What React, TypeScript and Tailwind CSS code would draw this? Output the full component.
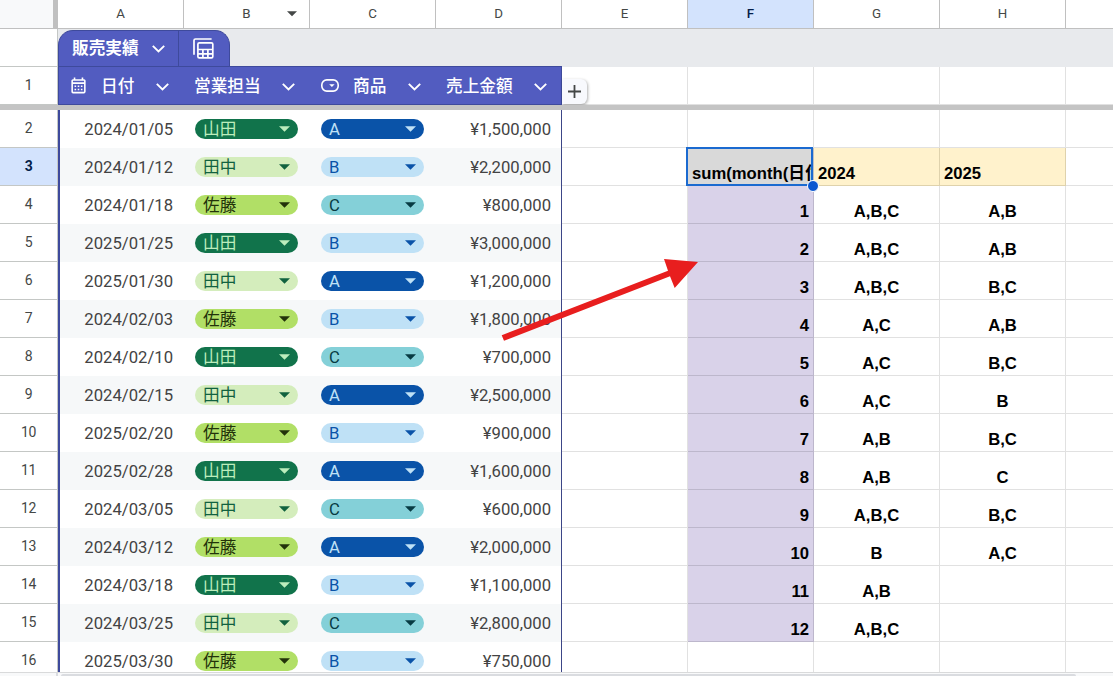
import type { ReactNode } from 'react';
import clsx from 'clsx';
import { MdOutlineCalendarMonth } from 'react-icons/md';

const columns = ['A', 'B', 'C', 'D', 'E', 'F', 'G', 'H'];

const sales = [
  { date: '2024/01/05', rep: '山田', product: 'A', amount: '¥1,500,000' },
  { date: '2024/01/12', rep: '田中', product: 'B', amount: '¥2,200,000' },
  { date: '2024/01/18', rep: '佐藤', product: 'C', amount: '¥800,000' },
  { date: '2025/01/25', rep: '山田', product: 'B', amount: '¥3,000,000' },
  { date: '2025/01/30', rep: '田中', product: 'A', amount: '¥1,200,000' },
  { date: '2024/02/03', rep: '佐藤', product: 'B', amount: '¥1,800,000' },
  { date: '2024/02/10', rep: '山田', product: 'C', amount: '¥700,000' },
  { date: '2024/02/15', rep: '田中', product: 'A', amount: '¥2,500,000' },
  { date: '2025/02/20', rep: '佐藤', product: 'B', amount: '¥900,000' },
  { date: '2025/02/28', rep: '山田', product: 'A', amount: '¥1,600,000' },
  { date: '2024/03/05', rep: '田中', product: 'C', amount: '¥600,000' },
  { date: '2024/03/12', rep: '佐藤', product: 'A', amount: '¥2,000,000' },
  { date: '2024/03/18', rep: '山田', product: 'B', amount: '¥1,100,000' },
  { date: '2024/03/25', rep: '田中', product: 'C', amount: '¥2,800,000' },
  { date: '2025/03/30', rep: '佐藤', product: 'B', amount: '¥750,000' },
];

// month, 2024, 2025
const pivot = [
  ['1', 'A,B,C', 'A,B'],
  ['2', 'A,B,C', 'A,B'],
  ['3', 'A,B,C', 'B,C'],
  ['4', 'A,C', 'A,B'],
  ['5', 'A,C', 'B,C'],
  ['6', 'A,C', 'B'],
  ['7', 'A,B', 'B,C'],
  ['8', 'A,B', 'C'],
  ['9', 'A,B,C', 'B,C'],
  ['10', 'B', 'A,C'],
  ['11', 'A,B', ''],
  ['12', 'A,B,C', ''],
];

const chipColors: Record<string, string> = {
  山田: 'bg-[#11734b] text-[#bcedbc]',
  田中: 'bg-[#d4edbc] text-[#11623f]',
  佐藤: 'bg-[#b1df66] text-[#23330a]',
  A: 'bg-[#0a53a8] text-[#bfe1f6]',
  B: 'bg-[#bfe1f6] text-[#0a53a8]',
  C: 'bg-[#84d0d8] text-[#073b43]',
};

function Chip({ label }: { label: string }) {
  return (
    <div className={clsx('flex h-[20.5px] w-[103px] items-center justify-between rounded-full pl-2 pr-[8px]', chipColors[label])}>
      <span className="pt-[2px] leading-5">{label}</span>
      <svg width="11" height="6" viewBox="0 0 11 6" fill="currentColor">
        <path d="M0 0.3h11L5.5 5.8z" />
      </svg>
    </div>
  );
}

function Chevron() {
  return (
    <svg width="13" height="8" viewBox="0 0 13 8" fill="none" stroke="currentColor" strokeWidth="1.9">
      <path d="M0.8 0.9l5.7 5.6 5.7-5.6" />
    </svg>
  );
}

function TableIcon() {
  return (
    <svg width="21" height="21" viewBox="0 0 21 21" fill="none" stroke="currentColor" strokeWidth="1.7">
      <path d="M1 16.8V2.5A1.5 1.5 0 0 1 2.5 1H18.6" />
      <rect x="4.9" y="4.9" width="14.9" height="14.9" rx="1.4" />
      <path d="M5 11.5h15M5 15.8h15M9.9 11.5v8.5M14.9 11.5v8.5" />
    </svg>
  );
}

function ChipIcon() {
  return (
    <svg width="18" height="13" viewBox="0 0 18 13" fill="none" stroke="currentColor" strokeWidth="1.6">
      <rect x="0.8" y="0.9" width="16.4" height="11.2" rx="5" />
      <path d="M8.2 5.2h5.4L10.9 8z" fill="currentColor" stroke="none" />
    </svg>
  );
}

function FieldHeader({ icon, label }: { icon?: ReactNode; label: string }) {
  return (
    <div className="flex w-[126px] items-center pr-[15px]">
      {icon && <span className="flex w-[43px] pl-[11px]">{icon}</span>}
      <span className={clsx('pt-[2px] font-medium', !icon && 'pl-[10px]')}>{label}</span>
      <span className="ml-auto pt-[2px]">
        <Chevron />
      </span>
    </div>
  );
}

function RowNumber({ n, active }: { n: number | string; active?: boolean }) {
  return (
    <div
      className={clsx(
        'flex w-[58px] shrink-0 items-center justify-center border-r border-b border-[#c4c7c5] text-[14px] tracking-[-0.4px]',
        active ? 'bg-[#d3e3fd] font-bold text-[#041e49]' : 'bg-white text-[#444746]'
      )}
    >
      {n}
    </div>
  );
}

function GridCell({ className, children }: { className?: string; children?: ReactNode }) {
  return (
    <div
      className={clsx(
        "flex w-[126px] shrink-0 overflow-hidden border-r border-b font-['Liberation_Sans','Noto_Sans_CJK_JP',sans-serif] font-bold text-black",
        className ?? 'border-[#e1e1e1]'
      )}
    >
      {children}
    </div>
  );
}

function PivotCells({ row }: { row: number }) {
  if (row === 3) {
    return (
      <>
        <div className="relative flex w-[126px] shrink-0">
          <GridCell className="items-end border-[#c0c0c0] bg-[#d9d9d9] pl-1">
            <span className="whitespace-nowrap leading-[22px]">sum(month(日付))</span>
          </GridCell>
          <div className="absolute -top-px -left-[2px] h-[39px] w-[127px] border-2 border-[#1b6ad0]" />
          <div className="absolute -right-[5px] -bottom-[6px] z-10 size-[12px] rounded-full border border-white bg-[#0b57d0]" />
        </div>
        <GridCell className="items-end border-[#dfd2ac] bg-[#fff2cc] pl-1 leading-[22px]">2024</GridCell>
        <GridCell className="items-end border-[#dfd2ac] bg-[#fff2cc] pl-1 leading-[22px]">2025</GridCell>
      </>
    );
  }

  const data = pivot[row - 4];
  if (!data) {
    return (
      <>
        <GridCell />
        <GridCell />
        <GridCell />
      </>
    );
  }

  return (
    <>
      <GridCell className="items-end justify-end border-[#bdb7cc] bg-[#d9d2e9] pr-1 leading-[22px]">{data[0]}</GridCell>
      <GridCell className="items-end justify-center border-[#e1e1e1] leading-[22px]">{data[1]}</GridCell>
      <GridCell className="items-end justify-center border-[#e1e1e1] leading-[22px]">{data[2]}</GridCell>
    </>
  );
}

export default function App() {
  return (
    <div className="relative flex h-[676px] w-[1113px] flex-col overflow-hidden bg-white font-['Roboto','Noto_Sans_CJK_JP',sans-serif] text-[16.67px] text-[#434343]">
      {/* column letters */}
      <div className="flex h-[29px] shrink-0 border-b border-[#c0c0c0] text-[13.33px] text-[#444746]">
        <div className="w-[58px] shrink-0 border-r-[5px] border-[#c0c0c0] bg-[#f8f9fa]" />
        {columns.map((c) => (
          <div
            key={c}
            className={clsx(
              'relative flex w-[126px] shrink-0 items-center justify-center border-r border-[#c0c0c0] pb-px',
              c === 'F' && 'bg-[#d3e3fd] font-medium text-[#041e49]'
            )}
          >
            {c}
            {c === 'B' && (
              <svg className="absolute top-[11px] right-3" width="10" height="6" viewBox="0 0 10 6" fill="#444746">
                <path d="M0 0.3h10L5 5.3z" />
              </svg>
            )}
          </div>
        ))}
      </div>

      {/* table name tab */}
      <div className="flex h-[38px] shrink-0">
        <RowNumber n="" />
        <div className="flex grow items-end bg-[#e8eaed]">
          <div className="flex h-[37px] w-[172px] rounded-t-[15px] border border-b-0 border-[#3e4a9c] bg-[#525cc0] text-white">
            <div className="flex w-[120px] items-center justify-between border-r border-[#3e4a9c] pr-[13px] pb-px pl-[13px]">
              <span className="font-bold">販売実績</span>
              <Chevron />
            </div>
            <div className="flex grow items-center justify-center pr-px pb-[2px]">
              <TableIcon />
            </div>
          </div>
        </div>
      </div>

      {/* frozen header row */}
      <div className="flex h-[38px] shrink-0">
        <RowNumber n={1} />
        <div className="-mt-px flex w-[504px] shrink-0 border border-[#3e4a9c] bg-[#525cc0] text-white">
          <div className="-ml-px flex">
            <FieldHeader icon={<MdOutlineCalendarMonth size={19} />} label="日付" />
            <FieldHeader label="営業担当" />
            <FieldHeader icon={<ChipIcon />} label="商品" />
            <FieldHeader label="売上金額" />
          </div>
        </div>
        <div className="relative flex shrink-0">
          <GridCell />
          <button className="absolute top-3 left-0 flex h-[25px] w-[25px] items-center justify-center rounded-r-md bg-[#f8f9fd] shadow-[1px_1px_3px_rgba(0,0,0,0.3)]">
            <svg width="13" height="13" viewBox="0 0 13 13" stroke="#444746" strokeWidth="1.8">
              <path d="M6.5 0v13M0 6.5h13" />
            </svg>
          </button>
        </div>
        <GridCell />
        <GridCell />
        <GridCell />
        <div className="grow border-b border-[#e1e1e1]" />
      </div>
      <div className="relative h-[5px] shrink-0 bg-[#c4c4c4]" />

      {/* scrolling rows */}
      <div className="h-[562px] shrink-0 overflow-hidden">
        {sales.map((s, i) => {
          const row = i + 2;
          return (
            <div key={row} className="flex h-[38px]">
              <RowNumber n={row} active={row === 3} />
              <div
                className={clsx(
                  'flex w-[504px] shrink-0 items-center border-r border-l-2 border-r-[#3c4687] border-l-[#3e4a9c]',
                  i % 2 ? 'bg-[#f6f8f9]' : 'bg-white'
                )}
              >
                <span className="w-[113px] text-right">{s.date}</span>
                <div className="ml-[22px] flex">
                  <Chip label={s.rep} />
                </div>
                <div className="ml-[23px] flex">
                  <Chip label={s.product} />
                </div>
                <span className="grow pr-[10px] text-right">{s.amount}</span>
              </div>
              <GridCell />
              <PivotCells row={row} />
              <div className="grow border-b border-[#e1e1e1]" />
            </div>
          );
        })}
      </div>

      {/* horizontal scrollbar */}
      <div className="flex h-1 shrink-0 border-t border-[#d9dadb] bg-[#f8f9fa]">
        <div className="w-[58px] shrink-0 border-r-2 border-[#dadce0]" />
        <div className="mt-px ml-[3px] w-[1015px] rounded-t-full bg-[#dadce0]" />
      </div>

      {/* annotation arrow */}
      <svg className="absolute top-[255px] left-[498px]" width="204" height="90" viewBox="498 255 204 90" fill="#e81e1e">
        <path d="M501.7 335.3L668 270.7 664 259 698 262 674.7 288 670 276.2 504 340.8z" />
      </svg>
    </div>
  );
}
